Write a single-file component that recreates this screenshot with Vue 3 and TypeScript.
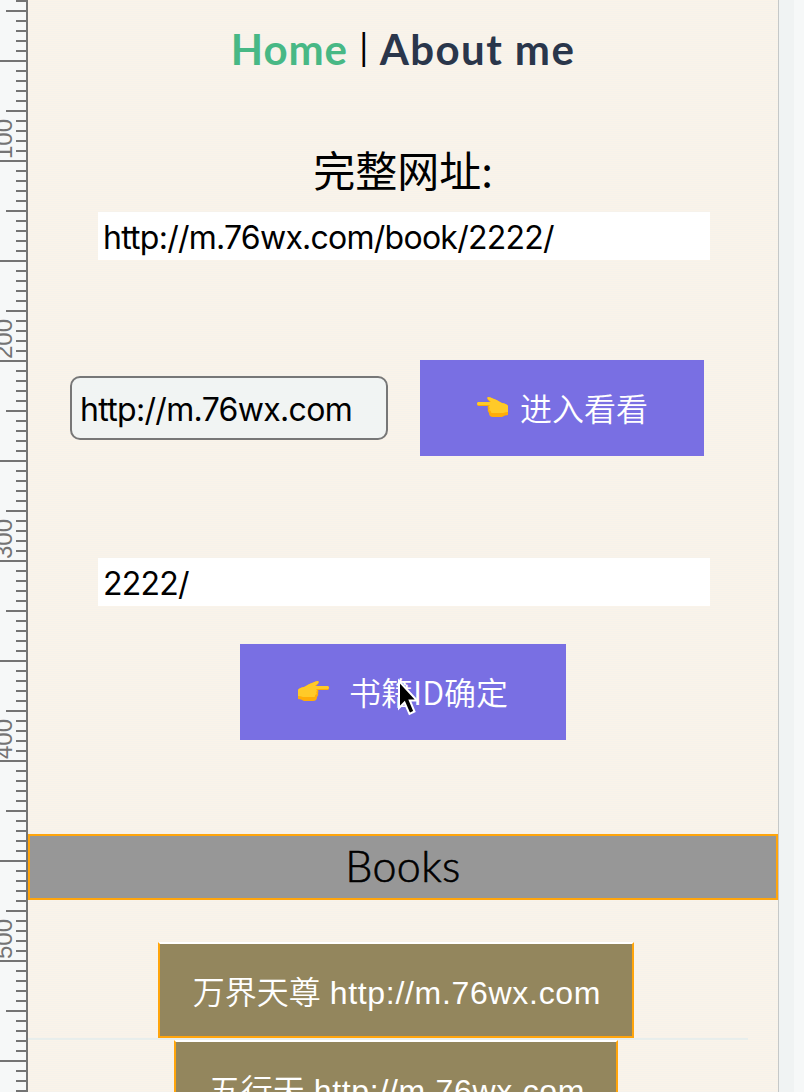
<script setup lang="ts">
import { ref } from 'vue'

interface Tick { y: number; x: number }
interface Book { id: number; title: string; source: string }

const ticks: Tick[] = Array.from({ length: 110 }, (_, i) => {
  const x = i % 10 === 6 ? 0 : i % 5 === 1 ? 6 : 16
  return { y: i * 10, x }
})
const labels: number[] = [100, 200, 300, 400, 500]

const fullUrl = ref('http://m.76wx.com/book/2222/')
const site = ref('http://m.76wx.com')
const bookId = ref('2222/')
const books: Book[] = [
  { id: 1, title: '万界天尊', source: 'http://m.76wx.com' },
  { id: 2, title: '五行天', source: 'http://m.76wx.com' },
]
</script>

<template>
  <div class="viewport">
    <svg class="ruler" width="28" height="1092" viewBox="0 0 28 1092">
      <rect v-for="t in ticks" :key="t.y" :x="t.x" :y="t.y" :width="26 - t.x" height="2" />
      <rect x="26" y="0" width="2" height="1092" />
      <text v-for="n in labels" :key="n" :transform="`translate(12 ${n * 2 - 41}) rotate(-90)`">{{ n }}</text>
    </svg>

    <main class="page">
      <nav class="nav">
        <a class="home">Home</a><span class="divider">|</span><a class="about">About me</a>
      </nav>

      <h2 class="label">完整网址:</h2>
      <input v-model="fullUrl" class="field" type="text" />

      <div class="site-row">
        <input v-model="site" class="site" type="text" />
        <button class="action enter">
          <svg class="hand" width="34" height="22" viewBox="0 0 34 22">
            <g transform="matrix(-1 0 0 1 34 0)">
              <path fill="#ffac08" d="M2 9Q3 7 8 6C11 5 12 3 16 2Q20 0 22 0Q24 1 21 4L20 5H32Q34 7 32 9H22Q23 11 22 12Q23 14 21 16Q21 20 17 20H8Q5 18 2 18Z" />
              <path fill="#ffca28" d="M2 9Q3 7 8 6C11 5 12 3 16 2Q20 0 22 0Q24 1 20 4L19 5H32Q34 7 32 8H20Q22 10 20 11Q22 13 19 14Q20 16 17 16H7Q4 15 2 15Z" />
            </g>
          </svg>
          <span>进入看看</span>
        </button>
      </div>

      <input v-model="bookId" class="field" type="text" />

      <button class="action confirm">
        <svg class="hand" width="34" height="22" viewBox="0 0 34 22">
          <path fill="#ffac08" d="M2 9Q3 7 8 6C11 5 12 3 16 2Q20 0 22 0Q24 1 21 4L20 5H32Q34 7 32 9H22Q23 11 22 12Q23 14 21 16Q21 20 17 20H8Q5 18 2 18Z" />
          <path fill="#ffca28" d="M2 9Q3 7 8 6C11 5 12 3 16 2Q20 0 22 0Q24 1 20 4L19 5H32Q34 7 32 8H20Q22 10 20 11Q22 13 19 14Q20 16 17 16H7Q4 15 2 15Z" />
        </svg>
        <span>书籍ID确定</span>
        <svg class="cursor" width="24" height="40" viewBox="0 0 24 40">
          <path fill="#000" stroke="#fff" stroke-width="2" d="M2 3V30L7.5 24.5L12.5 36L17.5 33.5L12.8 22.5H20Z" />
        </svg>
      </button>

      <h2 class="books-title">Books</h2>
      <ul class="books">
        <li v-for="b in books" :key="b.id" class="book"><span class="cjk">{{ b.title }}</span> <span class="source">{{ b.source }}</span></li>
      </ul>
      <div class="line"></div>
    </main>
    <aside class="gutter"></aside>
  </div>
</template>

<style>
html, body { margin: 0; overflow: hidden; }
</style>

<style scoped>
* { box-sizing: border-box; }
.viewport {
  display: flex;
  width: 804px;
  height: 1092px;
  overflow: hidden;
  background: #f6f8f8;
}
.ruler { flex: none; fill: #747474; font: 24px "Liberation Sans", sans-serif; }
.page {
  position: relative;
  flex: none;
  display: flex;
  flex-direction: column;
  align-items: center;
  width: 750px;
  height: 1092px;
  overflow: hidden;
  background: repeating-linear-gradient(#faf3e9 0 1px, #f6f2eb 1px 2px);
}
.page > * { flex: none; }
.gutter { flex: 1; border-left: 1px solid #c5c8c8; background: linear-gradient(90deg, #f0f3f3 0 15px, transparent 15px); }
.nav {
  display: flex;
  align-items: baseline;
  height: 100px;
  padding-top: 24px;
  font: 700 42px/50px Lato, sans-serif;
  white-space: pre;
}
.home { color: #48b885; letter-spacing: .9px; }
.divider { position: relative; top: -4px; width: 32px; text-align: center; font-weight: 400; font-size: 36px; color: #000; }
.about { color: #2a364b; letter-spacing: 1.4px; }
.label {
  margin: 39px 0 0;
  height: 73px;
  font: 400 42px/60px "Noto Sans CJK SC", sans-serif;
}
.field {
  width: 612px;
  height: 48px;
  margin: 0 0 0 2px;
  padding: 3px 5px 1px;
  border: 0;
  border-radius: 0;
  outline: 0;
  background: #fff;
  color: #000;
  font: 32px Inter, sans-serif;
  letter-spacing: -.75px;
}
.site-row { display: flex; align-items: center; gap: 32px; width: 666px; height: 96px; margin: 100px 0 102px; }
.site {
  width: 318px;
  height: 64px;
  padding: 3px 8px 1px;
  border: 2px solid #777;
  border-radius: 10px;
  background: #f1f4f3;
  color: #000;
  font: 32px Inter, sans-serif;
  letter-spacing: -.68px;
}
.action {
  position: relative;
  display: flex;
  align-items: center;
  height: 96px;
  margin: 0;
  padding: 0 0 0 56px;
  border: 0;
  background: #796fe3;
  color: #fff;
  font: 350 32px "Noto Sans CJK SC", sans-serif;
}
.action span { margin-top: -2px; white-space: nowrap; }
.hand { flex: none; }
.enter { width: 284px; gap: 10px; }
.confirm { width: 326px; margin-top: 38px; gap: 19px; }
.cursor { position: absolute; left: 157px; top: 34px; }
.books-title {
  width: 750px;
  height: 66px;
  margin: 94px 0 42px;
  border: 2px solid #ffa50c;
  background: #979797;
  color: #000;
  text-align: center;
  font: 300 43px/59px Lato, sans-serif;
  letter-spacing: .4px;
  -webkit-text-stroke: .6px #000;
}
.books {
  position: relative;
  z-index: 1;
  display: flex;
  flex-direction: column;
  align-items: center;
  gap: 2px;
  margin: 0 14px 0 0;
  padding: 0;
  list-style: none;
}
.book {
  height: 96px;
  padding: 0 31px 0 33px;
  border: 2px solid #ffa50c;
  border-top-color: #fff;
  background: #93865d;
  color: #fff;
  font: 32px/98px "Liberation Sans", sans-serif;
  white-space: nowrap;
}
.cjk { font-family: "Noto Sans CJK SC", sans-serif; font-weight: 350; line-height: 1; }
.source { letter-spacing: .7px; }
.line { position: absolute; left: 0; top: 1038px; width: 720px; height: 2px; background: #e8eeec; }
</style>
